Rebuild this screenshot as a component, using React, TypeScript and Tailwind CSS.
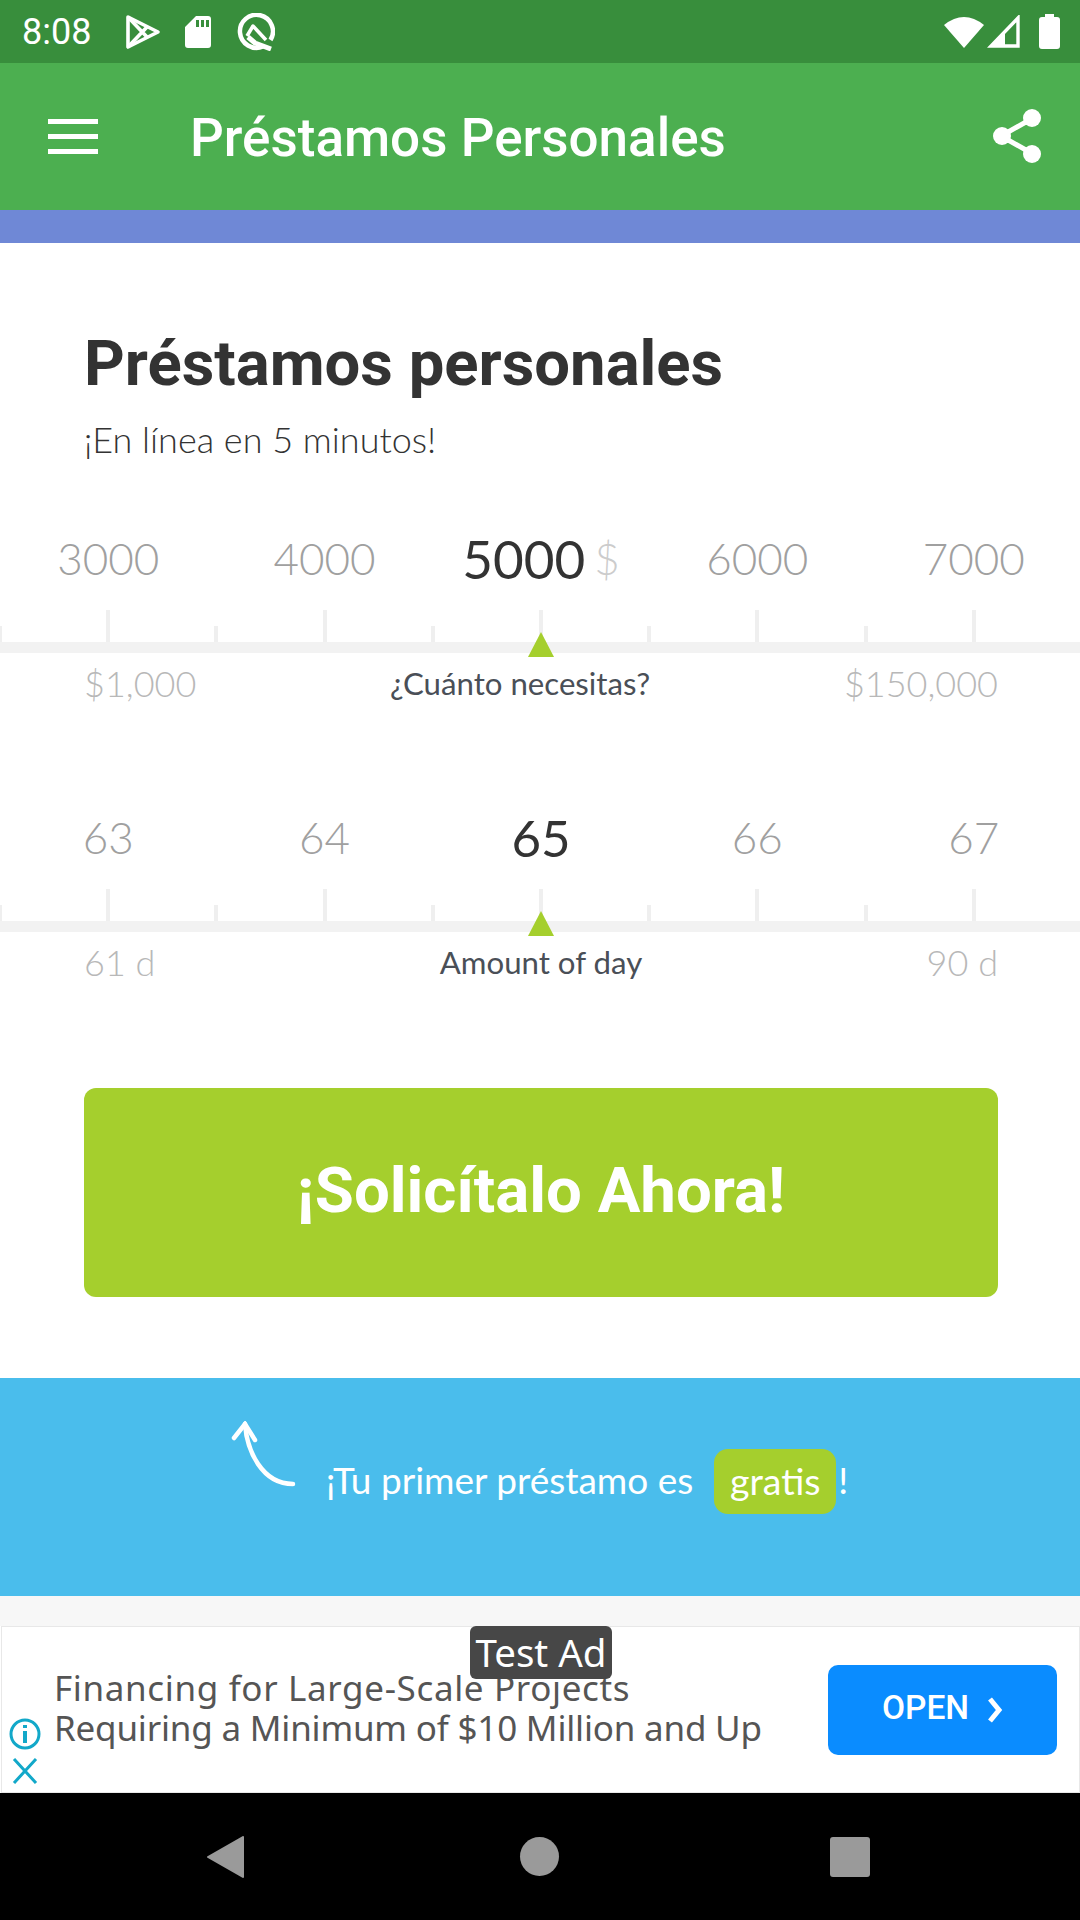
const lato = "font-['Lato','Noto_Sans',sans-serif]"
const roboto = "font-['Roboto',sans-serif]"

function Ruler({
  values,
  active,
  unit,
  left,
  label,
  right,
}: {
  values: string[]
  active: string
  unit?: string
  left: string
  label: string
  right: string
}) {
  const ticks = [0, 1, 2, 3, 4, 5, 6, 7, 8, 9, 10]
  return (
    <div className={`${lato} w-full`}>
      <div className="grid h-[84px] grid-cols-[repeat(5,216.4px)] items-center">
        {values.map((v) =>
          v === active ? (
            <div key={v} className="flex items-center justify-center gap-[9px] leading-none text-[#333333]">
              <span className={unit ? "text-[53px]" : "text-[51px]"}>{v}</span>
              {unit && <span className="text-[44px] font-light text-[#cccccc]">{unit}</span>}
            </div>
          ) : (
            <div key={v} className="text-center text-[44px] leading-none font-light text-[#a0a0a0]">
              {v}
            </div>
          )
        )}
      </div>
      <div className="mt-[10px] ml-[-2px] flex h-[32px] w-[1086px] items-end justify-between">
        {ticks.map((t) => (
          <div key={t} className={`w-[4px] bg-[#efefef] ${t % 2 === 1 ? "h-[32px]" : "h-[16px]"}`} />
        ))}
      </div>
      <div className="relative h-[11px] bg-[#f2f2f2]">
        <svg className="absolute top-[-10px] left-[528px]" width="26" height="25" viewBox="0 0 26 25">
          <path d="M13 0 L26 25 L0 25 Z" fill="#a5cf2d" />
        </svg>
      </div>
      <div className="mt-[7px] flex items-center justify-between pr-[82px] pl-[84px] text-[36px] leading-[46px]">
        <span className="font-light text-[#b8b8b8]">{left}</span>
        <span className="text-[31.2px] text-[#4a4f57]">{label}</span>
        <span className="font-light text-[#b8b8b8]">{right}</span>
      </div>
    </div>
  )
}

export default function App() {
  return (
    <div className={`${roboto} flex h-[1920px] w-[1080px] flex-col overflow-hidden bg-white`}>
      {/* status bar */}
      <div className="flex h-[63px] items-center justify-between bg-[#388e3c] pr-[20px] pl-[22px] text-white">
        <div className="flex items-center">
          <span className="text-[36px] leading-none">8:08</span>
          <svg className="ml-[34px]" width="36" height="36" viewBox="0 0 36 36" fill="none" stroke="#fff" strokeWidth="3.6" strokeLinejoin="round">
            <path d="M3 3 L33 18 L3 33 Z" />
            <path d="M3 3 L22 23 M3 33 L22 13" />
          </svg>
          <svg className="ml-[23px]" width="28" height="34" viewBox="0 0 28 34">
            <path fill="#fff" fillRule="evenodd" d="M12 1 H24 a3 3 0 0 1 3 3 V30 a3 3 0 0 1 -3 3 H4 a3 3 0 0 1 -3 -3 V12 Z M12 5 V12 H15 V5 Z M17 5 V12 H20 V5 Z M22 5 V12 H25 V5 Z" />
          </svg>
          <svg className="ml-[25px]" width="38" height="38" viewBox="0 0 38 38" fill="none" stroke="#fff">
            <path strokeWidth="4.5" d="M26 33.5 A16.5 16.5 0 1 1 33.5 27" />
            <path strokeWidth="3.5" strokeLinejoin="round" d="M10 23 L16 13 L29 27" />
            <path strokeWidth="5" d="M11 24 L18 30 L34 36" />
          </svg>
        </div>
        <div className="flex items-center">
          <svg width="40" height="32" viewBox="0 0 40 32">
            <path fill="#fff" d="M0 9 Q20 -7 40 9 L20 32 Z" />
          </svg>
          <svg className="ml-[3px]" width="33" height="33" viewBox="0 0 33 33" fill="none" stroke="#fff" strokeWidth="3.4">
            <path d="M31 3 V31 H4 Z" />
            <path fill="#fff" stroke="none" d="M18 15 V31 H3 Z" />
          </svg>
          <svg className="ml-[19px]" width="21" height="35" viewBox="0 0 21 35">
            <path fill="#fff" d="M6 0 H15 V3 H18 a3 3 0 0 1 3 3 V32 a3 3 0 0 1 -3 3 H3 a3 3 0 0 1 -3 -3 V6 a3 3 0 0 1 3 -3 H6 Z" />
          </svg>
        </div>
      </div>

      {/* app bar */}
      <div className="flex h-[147px] items-center bg-[#4caf50] pr-[39px] pl-[48px] text-white">
        <div className="flex w-[50px] flex-col gap-[10px]">
          <div className="h-[5px] bg-white" />
          <div className="h-[5px] bg-white" />
          <div className="h-[5px] bg-white" />
        </div>
        <div className="mt-[3px] ml-[92px] flex-1 text-[53px] leading-none font-medium">Préstamos Personales</div>
        <svg className="mt-[-2px]" width="48" height="54" viewBox="0 0 48 54" fill="none">
          <path stroke="#fff" strokeWidth="5" d="M40 9 L8 27 L40 45" />
          <circle cx="39" cy="9" r="9" fill="#fff" />
          <circle cx="9" cy="27" r="9" fill="#fff" />
          <circle cx="39" cy="45" r="9" fill="#fff" />
        </svg>
      </div>
      <div className="h-[33px] bg-[#6f88d6]" />

      {/* main */}
      <div className="flex h-[1135px] flex-col">
        <h1 className="mt-[85px] pl-[84px] text-[63.4px] leading-[70px] font-bold text-[#333333]">Préstamos personales</h1>
        <p className={`${lato} mt-[19px] pl-[84px] text-[36px] leading-[44px] font-light text-[#333333]`}>¡En línea en 5 minutos!</p>
        <div className="mt-[55px]">
          <Ruler
            values={["3000", "4000", "5000", "6000", "7000"]}
            active="5000"
            unit="$"
            left="$1,000"
            label="¿Cuánto necesitas?"
            right="$150,000"
          />
        </div>
        <div className="mt-[89px]">
          <Ruler
            values={["63", "64", "65", "66", "67"]}
            active="65"
            left="61 d"
            label="Amount of day"
            right="90 d"
          />
        </div>
        <div className="mt-[103px] mr-[82px] ml-[84px] flex h-[209px] items-center justify-center rounded-[12px] bg-[#a5cf2d] pb-[4px] text-[63.5px] font-bold text-white">
          ¡Solicítalo Ahora!
        </div>
      </div>

      {/* promo */}
      <div className={`${lato} flex h-[218px] items-start bg-[#4abdec] pl-[230px] text-white`}>
        <svg className="mt-[43px] shrink-0" width="66" height="68" viewBox="0 0 66 68" fill="none" stroke="#fff" strokeLinecap="round" strokeWidth="4.5">
          <path d="M15 3 C17 30 32 63 63 63" />
          <path d="M4 17 L15 3 L25 19" />
        </svg>
        <span className="mt-[80px] ml-[30px] text-[37px] leading-[44px]">¡Tu primer préstamo es</span>
        <span className="mt-[71px] ml-[21px] flex h-[65px] w-[122px] items-center justify-center rounded-[14px] bg-[#a5cf2d] text-[37.5px]">gratis</span>
        <span className="mt-[80px] ml-[2px] text-[37px] leading-[44px]">!</span>
      </div>

      <div className="h-[30px] bg-[#f7f7f7]" />

      {/* ad */}
      <div className="relative ml-[1px] flex h-[167px] items-center border border-[#e8e8e8] bg-white">
        <div className="absolute top-[-1px] left-[468px] flex h-[53px] w-[142px] items-center justify-center rounded-[6px] bg-[#474747] pt-[1px] font-['Noto_Sans',sans-serif] text-[38.5px] text-white">
          Test Ad
        </div>
        <div className="flex w-[46px] flex-col items-center self-end pb-[8px]">
          <svg width="32" height="32" viewBox="0 0 32 32" fill="none" stroke="#12a8c9" strokeWidth="3">
            <circle cx="16" cy="16" r="14" />
            <path strokeWidth="4" d="M16 13 V25 M16 7 V10" />
          </svg>
          <svg className="mt-[8px]" width="26" height="26" viewBox="0 0 26 26" fill="none" stroke="#12a8c9" strokeWidth="3">
            <path d="M2 1 L24 25 M24 1 L2 25" />
          </svg>
        </div>
        <div className="mb-[4px] ml-[6px] font-['Noto_Sans',sans-serif] text-[35px] leading-[40px] text-[#555555]">
          <div className="tracking-[0.65px]">Financing for Large-Scale Projects</div>
          <div className="tracking-[-0.2px]">Requiring a Minimum of $10 Million and Up</div>
        </div>
        <div className="absolute top-[38px] right-[22px] flex h-[90px] w-[229px] items-center justify-center gap-[18px] rounded-[10px] bg-[#0a8cff] pb-[4px] text-[33.5px] font-medium text-white">
          OPEN
          <svg className="mt-[4px]" width="16" height="26" viewBox="0 0 16 26" fill="none" stroke="#fff" strokeWidth="5">
            <path d="M3 2 L12 13 L3 24" />
          </svg>
        </div>
      </div>

      {/* nav bar */}
      <div className="flex h-[127px] items-center bg-black pl-[207px]">
        <svg width="37" height="42" viewBox="0 0 37 42">
          <path fill="#9a9a9a" stroke="#9a9a9a" strokeWidth="2" strokeLinejoin="round" d="M36 1 V41 L1 21 Z" />
        </svg>
        <div className="ml-[276px] size-[39px] rounded-full bg-[#9a9a9a]" />
        <div className="ml-[271px] size-[40px] rounded-[3px] bg-[#9a9a9a]" />
      </div>
    </div>
  )
}
